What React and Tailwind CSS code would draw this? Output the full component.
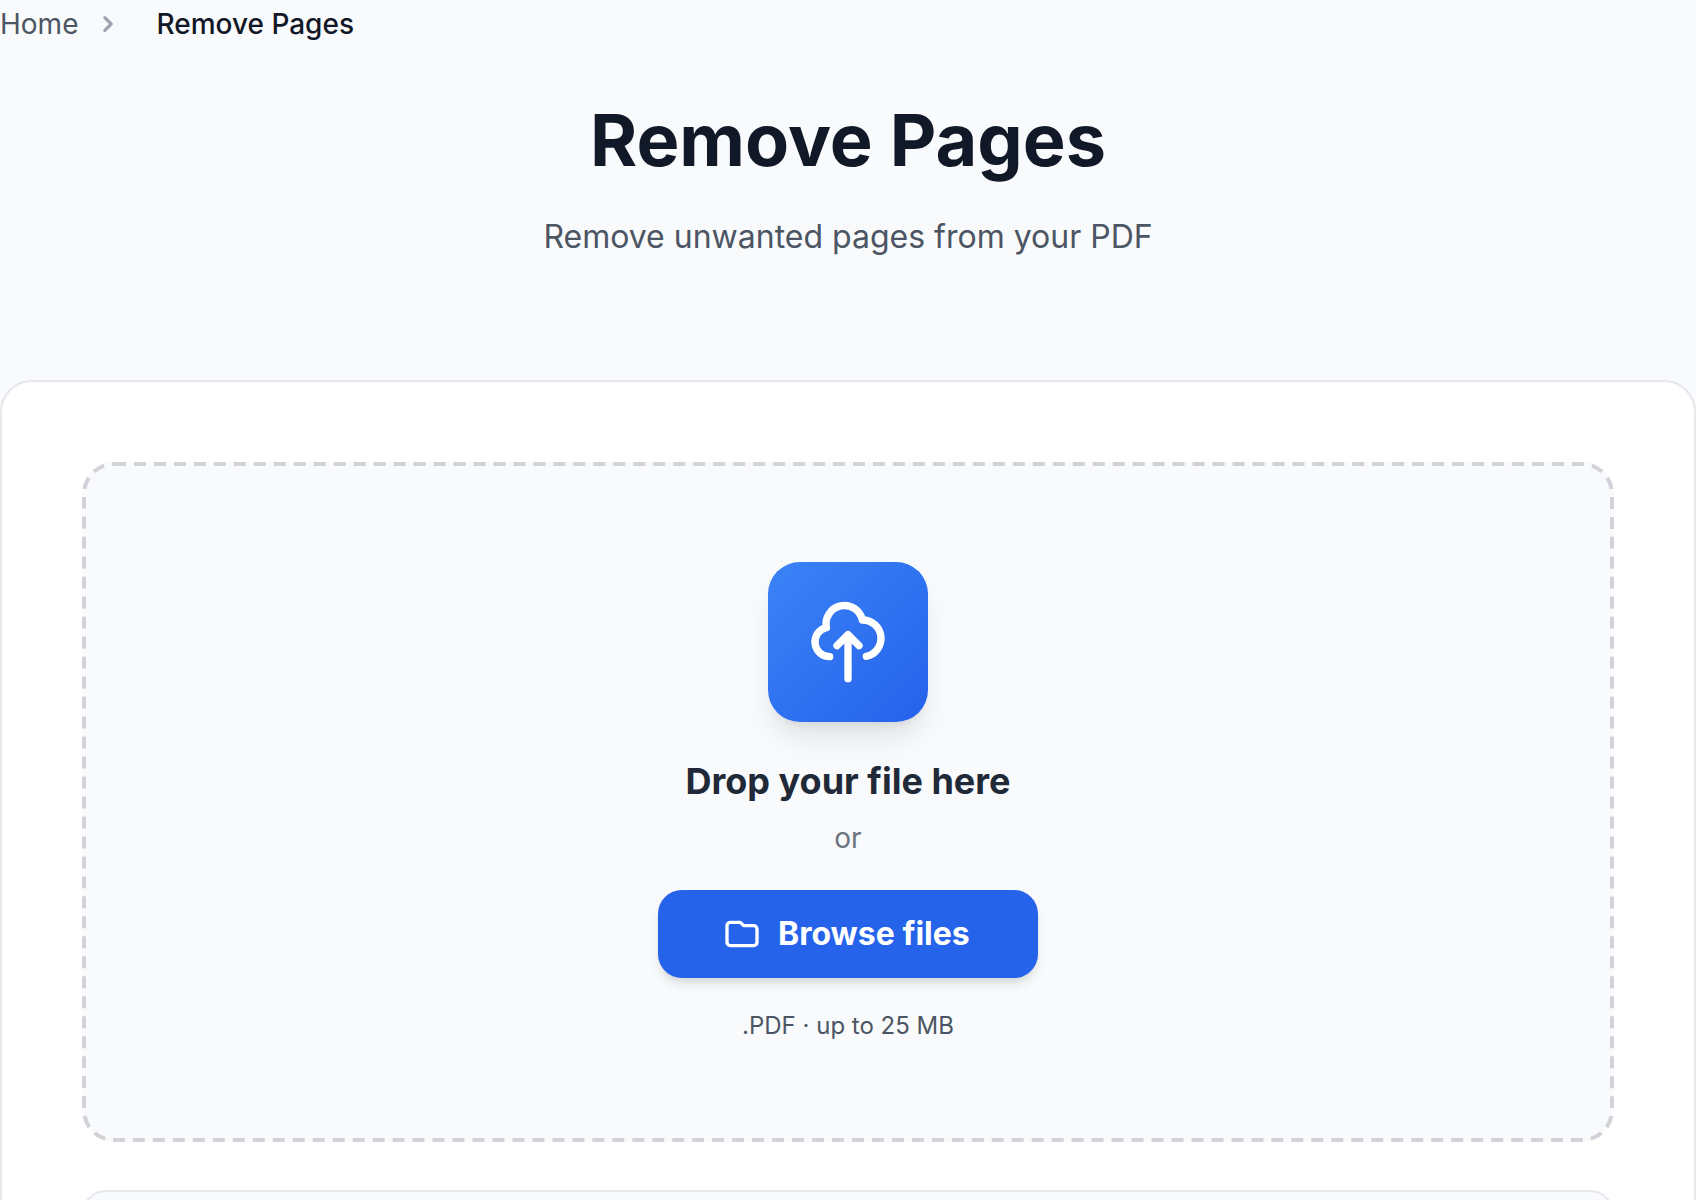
import { useRef, useState } from 'react';


const UploadIcon = () => (
  <svg className="size-22" fill="none" stroke="currentColor" strokeWidth="2" viewBox="0 0 24 24" aria-hidden="true">
    <path
      strokeLinecap="round"
      strokeLinejoin="round"
      d="M7 16a4 4 0 01-.88-7.903A5 5 0 1115.9 6L16 6a5 5 0 011 9.9M15 13l-3-3m0 0l-3 3m3-3v12"
    />
  </svg>
);

const FolderIcon = () => (
  <svg className="size-10" fill="none" stroke="currentColor" strokeWidth="2" viewBox="0 0 24 24" aria-hidden="true">
    <path
      strokeLinecap="round"
      strokeLinejoin="round"
      d="M3 7v10a2 2 0 002 2h14a2 2 0 002-2V9a2 2 0 00-2-2h-6l-2-2H5a2 2 0 00-2 2z"
    />
  </svg>
);

const ChevronIcon = () => (
  <svg className="size-8 text-[#9ca3af]" fill="currentColor" viewBox="0 0 20 20" aria-hidden="true">
    <path
      fillRule="evenodd"
      clipRule="evenodd"
      d="M7.293 14.707a1 1 0 010-1.414L10.586 10 7.293 6.707a1 1 0 011.414-1.414l4 4a1 1 0 010 1.414l-4 4a1 1 0 01-1.414 0z"
    />
  </svg>
);

// longer dashes than border-dashed gives
const DashedOutline = () => (
  <svg className="pointer-events-none absolute inset-0 size-full text-[#d1d3d8]" fill="none" aria-hidden="true">
    <rect
      className="h-[calc(100%-4px)] w-[calc(100%-4px)]"
      x="2"
      y="2"
      rx="30"
      stroke="currentColor"
      strokeWidth="4"
      strokeDasharray="12 8"
      pathLength="4362"
    />
  </svg>
);


const App = () => {

  const inputRef = useRef(null);
  const [file, setFile] = useState(null);

  const handleDrop = (e) => {
    e.preventDefault();
    setFile(e.dataTransfer.files[0]);
  };

  return (
    <div className="h-screen overflow-hidden bg-[#f9fafb] font-['Inter',sans-serif]">

      {/* breadcrumb */}
      <nav>
        <ol className="flex items-center text-[28px] leading-12">
          <li>
            <a href="#home" className="text-[#4b5563]">Home</a>
          </li>
          <li className="ml-3.5 flex items-center">
            <ChevronIcon />
            <span className="ml-8 font-medium text-[#111827]">Remove Pages</span>
          </li>
        </ol>
      </nav>


      {/* title */}
      <header className="mt-12 text-center">
        <h1 className="text-7xl leading-22 font-bold text-[#111827]">Remove Pages</h1>
        <p className="mt-6 text-[32px] leading-[58px] text-[#4b5563]">Remove unwanted pages from your PDF</p>
      </header>


      <main className="mt-[114px] rounded-t-[32px] border-2 border-[#e5e7eb] bg-white p-20">

        {/* drop zone */}
        <section
          onDrop={handleDrop}
          onDragOver={(e) => e.preventDefault()}
          className="relative flex flex-col items-center rounded-[32px] bg-[#f9fafb] p-25"
        >
          <DashedOutline />
          <div className="flex size-40 items-center justify-center rounded-[32px] bg-linear-to-br/srgb from-[#3b82f6] to-[#2563eb] text-white shadow-[0_20px_30px_-6px_rgba(0,0,0,0.1),0_8px_12px_-8px_rgba(0,0,0,0.1)]">
            <UploadIcon />
          </div>
          <h2 className="mt-8 text-4xl leading-[54px] font-bold text-[#1f2937]">Drop your file here</h2>
          <p className="mt-2.5 text-[28px] leading-10 text-[#6b7280]">or</p>

          <button
            type="button"
            onClick={() => inputRef.current.click()}
            className="mt-8 flex h-22 min-w-95 items-center gap-4 rounded-3xl bg-[#2563eb] px-16 text-[32px] font-bold text-white shadow-[0_8px_12px_-2px_rgba(0,0,0,0.1),0_4px_8px_-4px_rgba(0,0,0,0.1)]"
          >
            <FolderIcon />
            Browse files
          </button>
          <input
            ref={inputRef}
            type="file"
            accept=".pdf"
            aria-label="Browse files"
            onChange={(e) => setFile(e.target.files[0])}
            className="hidden"
          />

          <p className="mt-8 text-2xl text-[#4b5563]">{file ? file.name : '.PDF · up to 25 MB'}</p>
        </section>


        {/* details panel */}
        <section className="mt-12 h-40 rounded-3xl border-2 border-[#e5e7eb] bg-[#f9fafb]" />
      </main>
    </div>
  );
};

export default App;
